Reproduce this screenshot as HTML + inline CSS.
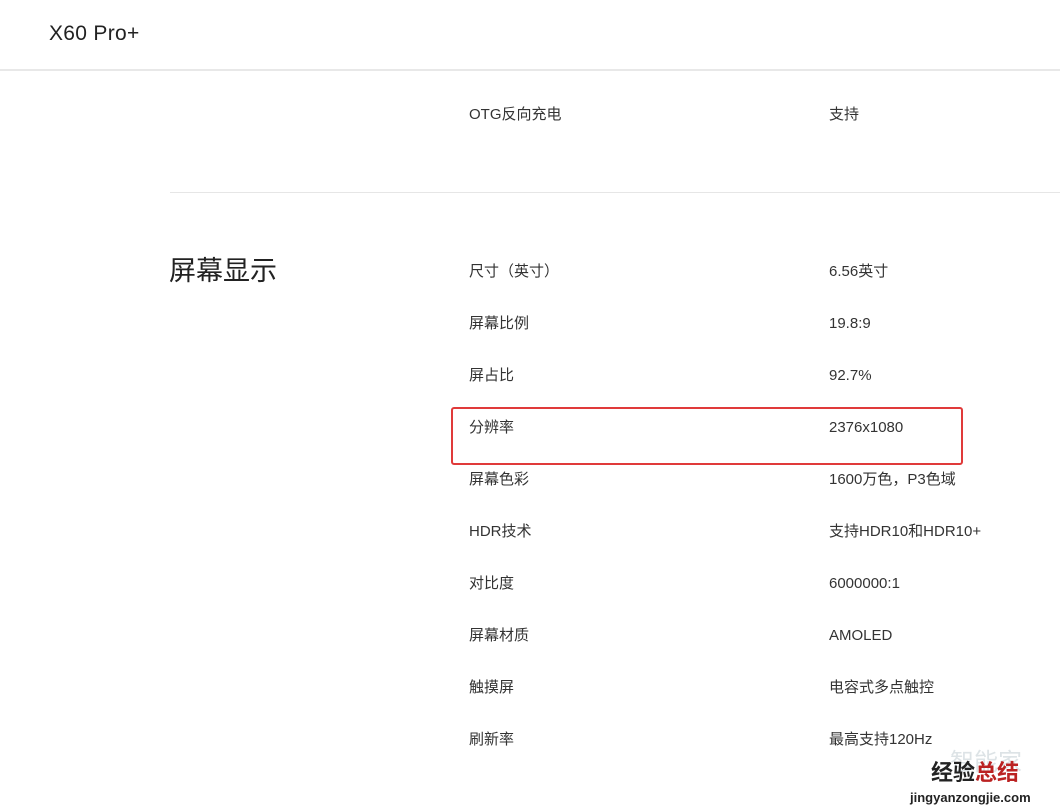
<!DOCTYPE html>
<html><head><meta charset="utf-8"><style>
body{margin:0;width:1060px;height:811px;background:#fff;position:relative;overflow:hidden;font-family:"Liberation Sans","Noto Sans CJK SC",sans-serif;color:#333}
.t{position:absolute;font-size:15px;line-height:20px;white-space:nowrap}
.l{left:469px}.v{left:829px}
</style></head><body>
<div class="t" style="left:49px;top:21px;font-size:21px;line-height:26px;color:#222;letter-spacing:0.3px">X60 Pro+</div>
<div style="position:absolute;left:0;top:69px;width:1060px;height:2px;background:#e8e8e8"></div>
<div class="t l" style="top:105px">OTG反向充电</div><div class="t v" style="top:105px">支持</div>
<div style="position:absolute;left:170px;top:192px;width:890px;height:1px;background:#e6e6e6"></div>
<div class="t" style="left:169px;top:255px;font-size:27px;line-height:32px;color:#222">屏幕显示</div>
<div class="t l" style="top:262px">尺寸（英寸）</div><div class="t v" style="top:262px">6.56英寸</div>
<div class="t l" style="top:314px">屏幕比例</div><div class="t v" style="top:314px">19.8:9</div>
<div class="t l" style="top:366px">屏占比</div><div class="t v" style="top:366px">92.7%</div>
<div class="t l" style="top:418px">分辨率</div><div class="t v" style="top:418px">2376x1080</div>
<div class="t l" style="top:470px">屏幕色彩</div><div class="t v" style="top:470px">1600万色，P3色域</div>
<div class="t l" style="top:522px">HDR技术</div><div class="t v" style="top:522px">支持HDR10和HDR10+</div>
<div class="t l" style="top:574px">对比度</div><div class="t v" style="top:574px">6000000:1</div>
<div class="t l" style="top:626px">屏幕材质</div><div class="t v" style="top:626px">AMOLED</div>
<div class="t l" style="top:678px">触摸屏</div><div class="t v" style="top:678px">电容式多点触控</div>
<div class="t l" style="top:730px">刷新率</div><div class="t v" style="top:730px">最高支持120Hz</div>
<div style="position:absolute;left:451px;top:407px;width:508px;height:54px;border:2px solid #e03a3a;border-radius:3px"></div>
<div class="t" style="left:950px;top:750px;font-size:24px;line-height:26px;color:#dde3e6">智能家</div>
<div class="t" style="left:931px;top:760px;font-size:22px;line-height:26px;font-weight:bold;color:#222">经验<span style="color:#b22">总结</span></div>
<div class="t" style="left:910px;top:790px;font-size:13px;line-height:16px;font-weight:bold;color:#222">jingyanzongjie.com</div>
</body></html>
